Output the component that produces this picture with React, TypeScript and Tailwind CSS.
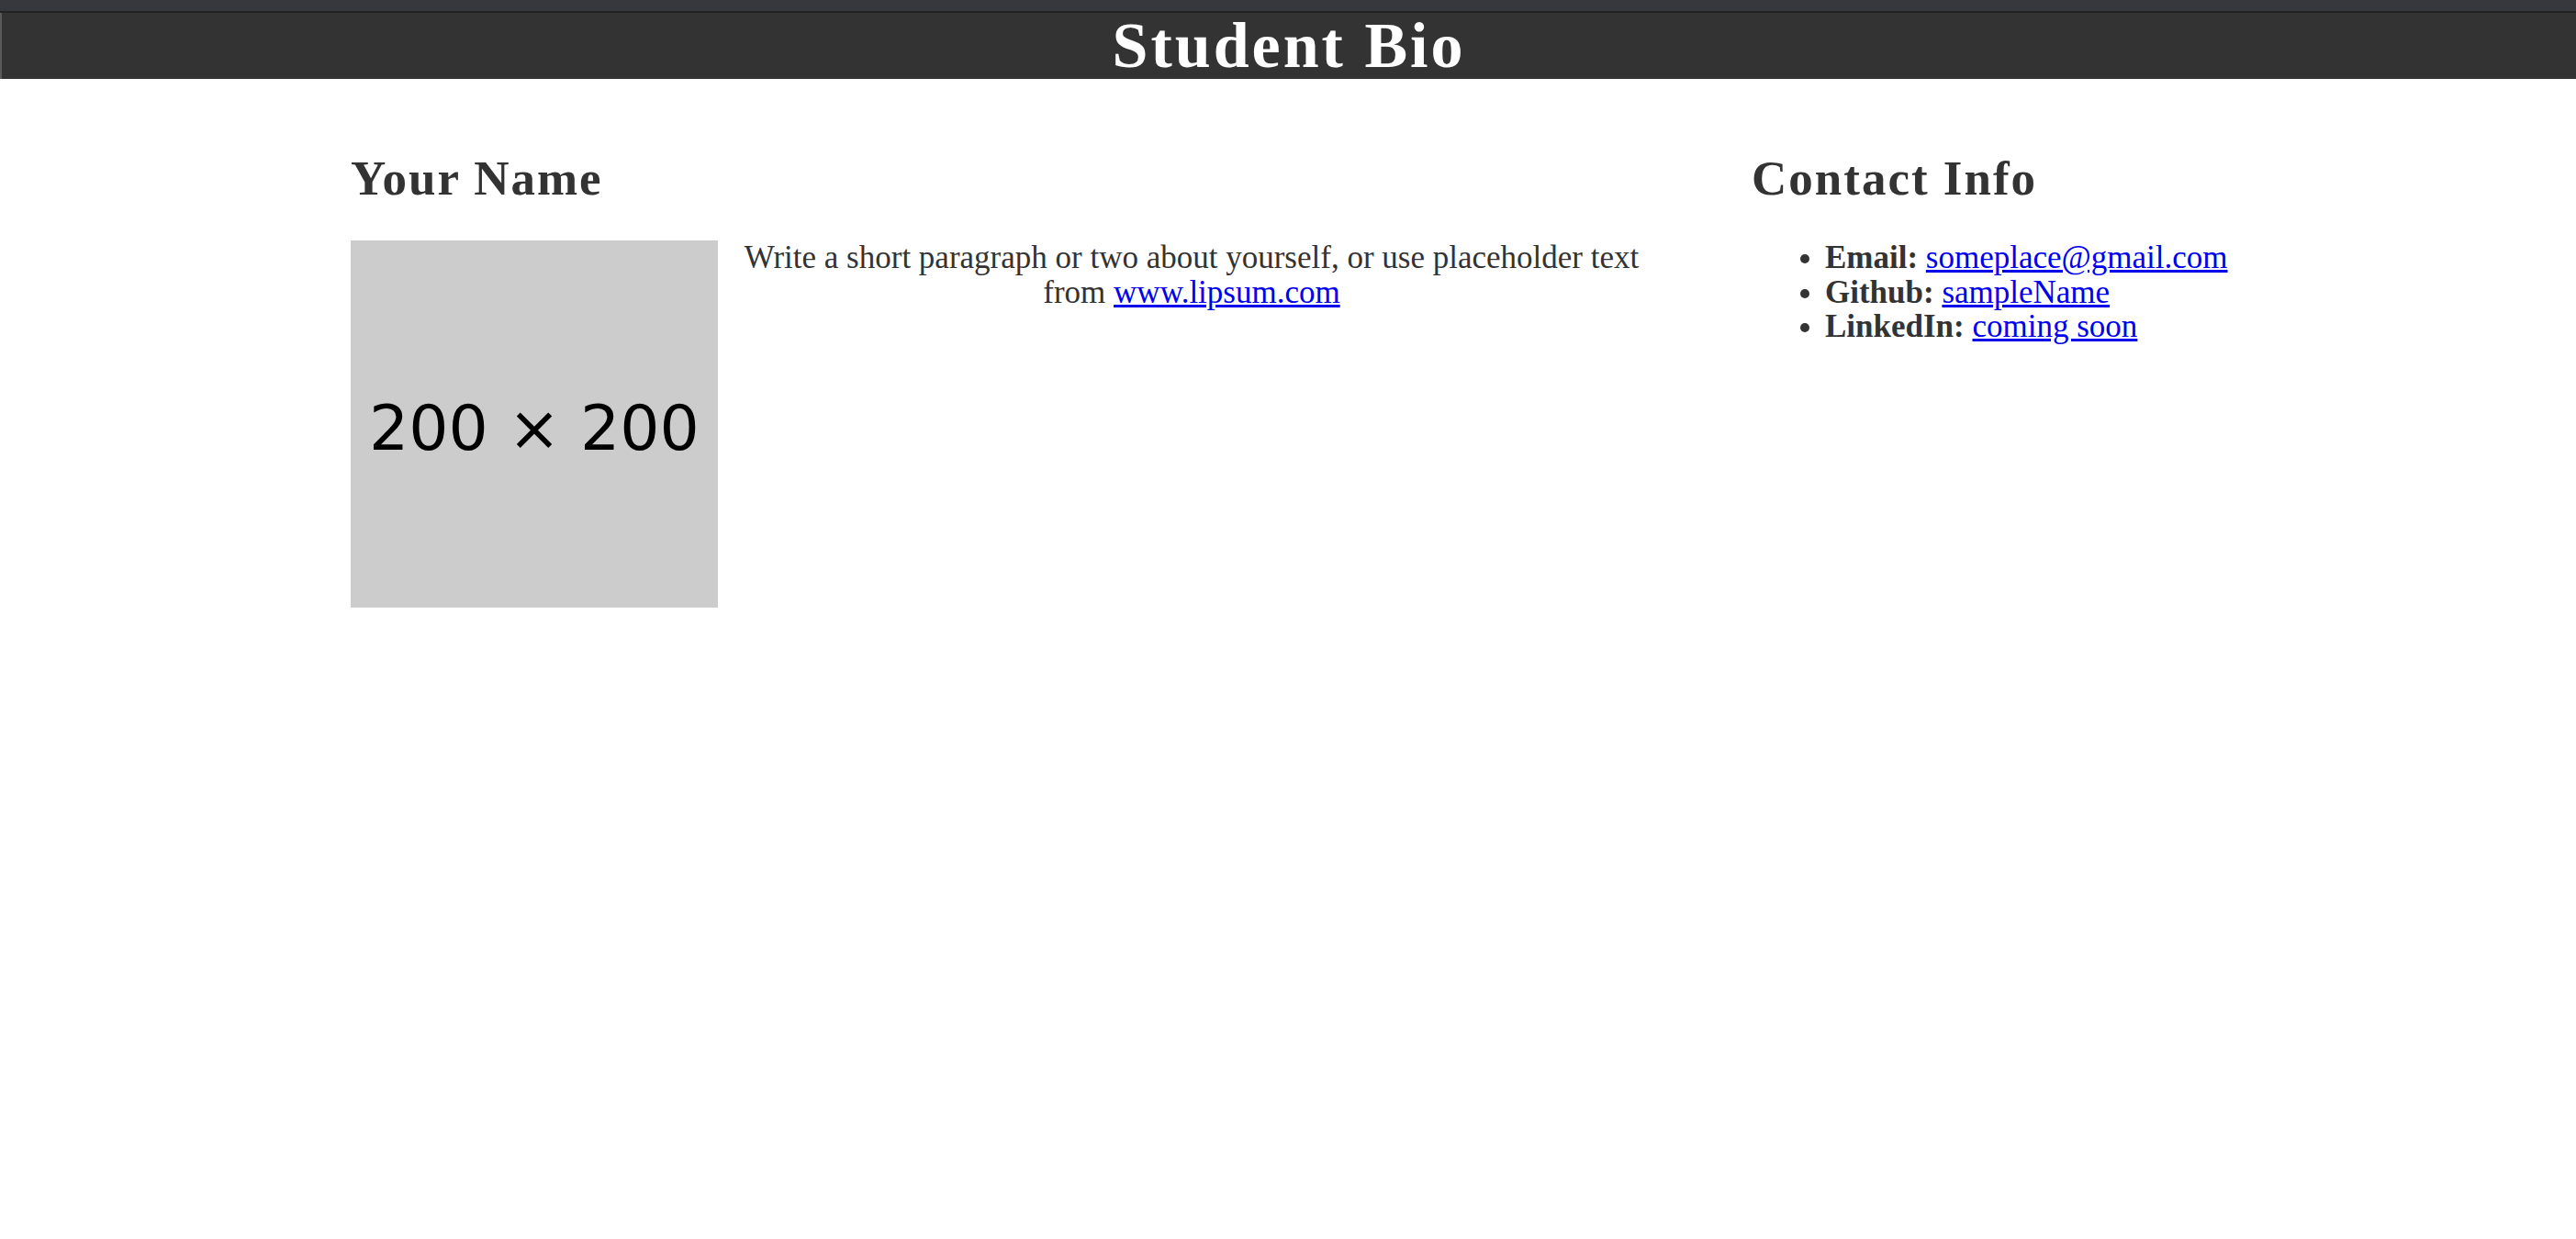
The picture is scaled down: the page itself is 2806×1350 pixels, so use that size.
export default function App() {
  const serif = "font-['Liberation_Serif',_'DejaVu_Serif',_serif]";

  return (
    <div className={`min-h-screen bg-white text-[#333333] ${serif}`}>
      {/* top bar */}
      <div className="h-[12px] bg-[#37383d]" />
      <div className="h-[2px] bg-[#222222]" />
      <header className="h-[72px] bg-[#333333] border-l-2 border-[#5a5a5a] flex justify-center">
        <h1 className="text-[70px] leading-[72px] font-bold text-white tracking-[3px]">Student Bio</h1>
      </header>

      <main className="flex pt-[78px] pl-[382px]">
        <section className="w-[1432px]">
          <h2 className="text-[53px] leading-[60px] font-bold tracking-[2px]">Your Name</h2>
          <div className="flex mt-[38px]">
            <div className="w-[400px] h-[400px] shrink-0 bg-[#cccccc] flex items-center justify-center pt-[10px]">
              <span className="font-['DejaVu_Sans',_sans-serif] text-[68px] leading-none text-black">200 × 200</span>
            </div>
            <p className="flex-1 text-center text-[35px] leading-[37.5px]">
              Write a short paragraph or two about yourself, or use placeholder text from{" "}
              <a href="#" className="text-[#0000ee] underline">www.lipsum.com</a>
            </p>
          </div>
        </section>

        <section className="ml-[94px] w-[620px]">
          <h2 className="text-[53px] leading-[60px] font-bold tracking-[2px]">Contact Info</h2>
          <ul className="mt-[38px] list-disc pl-[80px] text-[35px] leading-[37.5px] whitespace-nowrap">
            <li>
              <b>Email:</b> <a href="#" className="text-[#0000ee] underline">someplace@gmail.com</a>
            </li>
            <li>
              <b>Github:</b> <a href="#" className="text-[#0000ee] underline">sampleName</a>
            </li>
            <li>
              <b>LinkedIn:</b> <a href="#" className="text-[#0000ee] underline">coming soon</a>
            </li>
          </ul>
        </section>
      </main>
    </div>
  );
}
